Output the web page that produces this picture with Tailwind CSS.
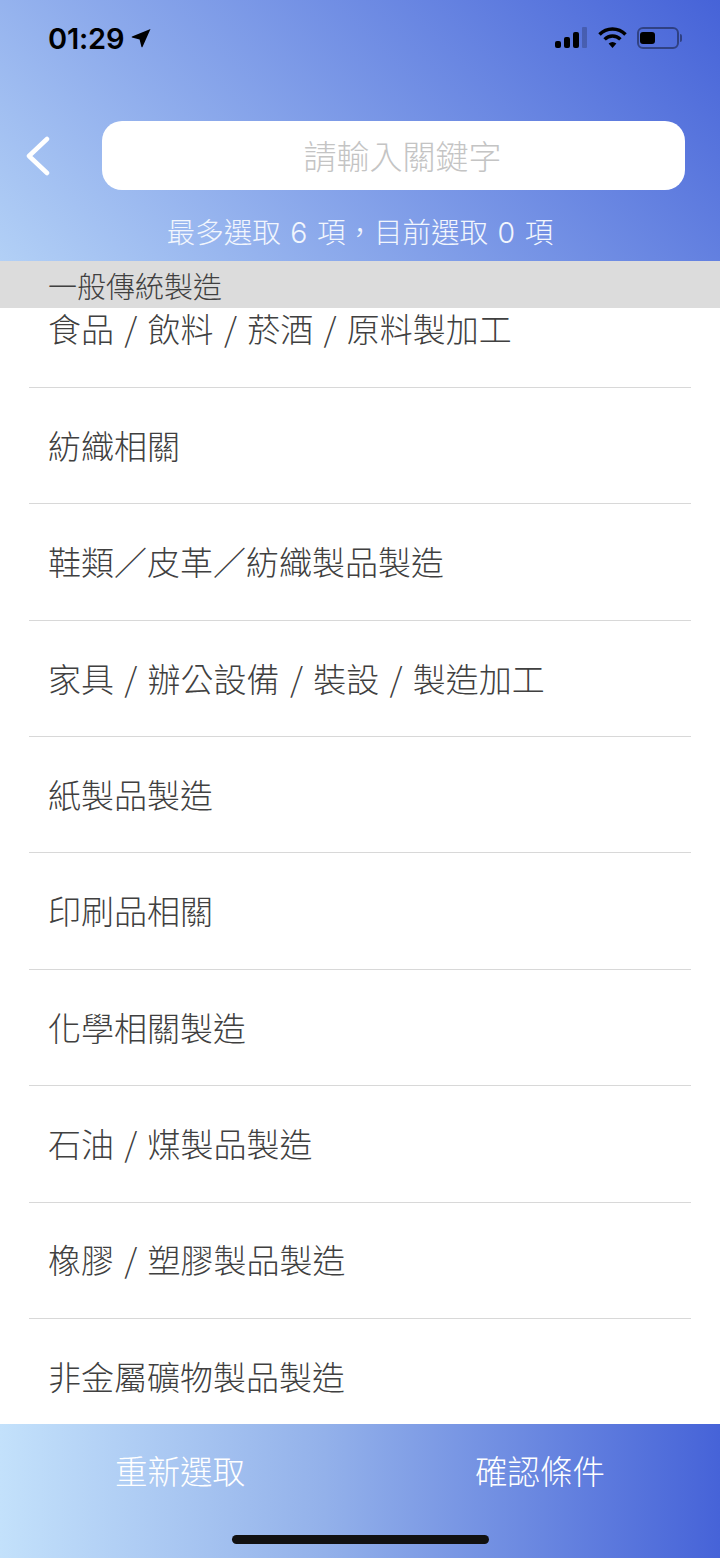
<!DOCTYPE html>
<html lang="zh-Hant">

<head>
    <meta charset="UTF-8">
    <meta name="viewport" content="width=device-width, initial-scale=1.0">
    <script src="https://cdn.jsdelivr.net/npm/@tailwindcss/browser@4"></script>
    <title>產業類別</title>
</head>

<body class="bg-white">
    <div class="flex flex-col w-[720px] h-[1558px] overflow-hidden font-['Noto_Sans_CJK_TC','Noto_Sans',sans-serif]">

        <!-- header -->
        <header class="h-[261px] shrink-0 flex flex-col bg-[linear-gradient(45deg,#b2d0f6_0%,#4663d8_100%)]">
            <div class="h-[76px] pl-[48px] pr-[38px] flex items-center justify-between text-black">
                <div class="flex items-center gap-[7px]">
                    <span class="font-['Inter',sans-serif] text-[29px] font-semibold leading-none tracking-[-0.2px]">01:29</span>
                    <svg class="w-[20px] h-[20px]" viewBox="0 0 20 20">
                        <path d="M19.5 1 L11.5 19 Q11 19.8 10.4 18.8 L8.6 11.4 L1 9.6 Q0.2 9 1 8.4 Z" fill="#000" />
                    </svg>
                </div>
                <div class="flex items-center gap-[10px]">
                    <svg class="w-[33px] h-[22px]" viewBox="0 0 33 22">
                        <rect x="0" y="14" width="6" height="7" rx="2" fill="#000" />
                        <rect x="9" y="10" width="6" height="11" rx="2" fill="#000" />
                        <rect x="18" y="5" width="6" height="16" rx="2" fill="#000" />
                        <rect x="27" y="0" width="5" height="21" rx="1" fill="#000" opacity="0.2" />
                    </svg>
                    <svg class="w-[29px] h-[22px]" viewBox="0 0 29 22">
                        <path d="M1.5 7.5 A18 18 0 0 1 27.5 7.5" fill="none" stroke="#000" stroke-width="3.4" />
                        <path d="M6.6 12.4 A11 11 0 0 1 22.4 12.4" fill="none" stroke="#000" stroke-width="3.4" />
                        <path d="M10.6 16.6 Q14.5 13.4 18.4 16.6 L14.5 21 Z" fill="#000" />
                    </svg>
                    <div class="flex items-center gap-[1px]">
                        <div class="w-[42px] h-[22px] rounded-[6px] border-2 border-black/40 px-[1px] py-[3px]">
                            <div class="w-[15px] h-full rounded-[3px] bg-black"></div>
                        </div>
                        <div class="w-[2px] h-[8px] rounded-r-sm bg-black/40"></div>
                    </div>
                </div>
            </div>

            <div class="mt-[45px] flex items-center pl-[26px] pr-[35px]">
                <svg class="w-[24px] h-[40px] shrink-0" viewBox="0 0 24 40" fill="none">
                    <path d="M21 3 L3 20 L21 37" stroke="#fff" stroke-width="4.5" stroke-linecap="round" stroke-linejoin="round" />
                </svg>
                <div class="ml-[52px] flex-1 h-[69px] pl-[18px] rounded-[20px] bg-white flex items-center justify-center">
                    <span class="text-[33px] leading-none text-[#c4c4c4] font-light">請輸入關鍵字</span>
                </div>
            </div>

            <div class="mt-[26px] text-center text-[#f2f6fd] text-[28.5px] leading-[34px] font-light font-['Inter','Noto_Sans_CJK_TC',sans-serif] [word-spacing:1.5px]">最多選取 6 項，目前選取 0 項</div>
        </header>

        <!-- section title -->
        <div class="h-[47px] shrink-0 pl-[48px] bg-[#dcdcdc] text-[#404040] text-[29px] leading-[48px] font-light z-10">一般傳統製造</div>

        <!-- list -->
        <main class="flex-1 min-h-0 overflow-hidden">
            <ul class="mt-[-36.6px] mx-[29px] text-[33px] text-[#404040] font-light [word-spacing:3px]">
                <li class="h-[116.4px] pl-[19px] flex items-center border-b border-[#d8d8d8]">食品 / 飲料 / 菸酒 / 原料製加工</li>
                <li class="h-[116.4px] pl-[19px] flex items-center border-b border-[#d8d8d8]">紡織相關</li>
                <li class="h-[116.4px] pl-[19px] flex items-center border-b border-[#d8d8d8]">鞋類／皮革／紡織製品製造</li>
                <li class="h-[116.4px] pl-[19px] flex items-center border-b border-[#d8d8d8]">家具 / 辦公設備 / 裝設 / 製造加工</li>
                <li class="h-[116.4px] pl-[19px] flex items-center border-b border-[#d8d8d8]">紙製品製造</li>
                <li class="h-[116.4px] pl-[19px] flex items-center border-b border-[#d8d8d8]">印刷品相關</li>
                <li class="h-[116.4px] pl-[19px] flex items-center border-b border-[#d8d8d8]">化學相關製造</li>
                <li class="h-[116.4px] pl-[19px] flex items-center border-b border-[#d8d8d8]">石油 / 煤製品製造</li>
                <li class="h-[116.4px] pl-[19px] flex items-center border-b border-[#d8d8d8]">橡膠 / 塑膠製品製造</li>
                <li class="h-[116.4px] pl-[19px] flex items-center">非金屬礦物製品製造</li>
            </ul>
        </main>

        <!-- bottom actions -->
        <footer class="relative h-[134px] shrink-0 bg-[linear-gradient(90deg,#c3e1fb_0%,#93b1ea_45%,#4663d8_100%)]">
            <div class="flex h-[92px] text-[32.5px] font-light text-white">
                <button class="flex-1 flex items-center justify-center">重新選取</button>
                <button class="flex-1 flex items-center justify-center">確認條件</button>
            </div>
            <div class="absolute left-[232px] bottom-[14px] w-[257px] h-[9px] rounded-full bg-[#111]"></div>
        </footer>
    </div>
</body>

</html>
